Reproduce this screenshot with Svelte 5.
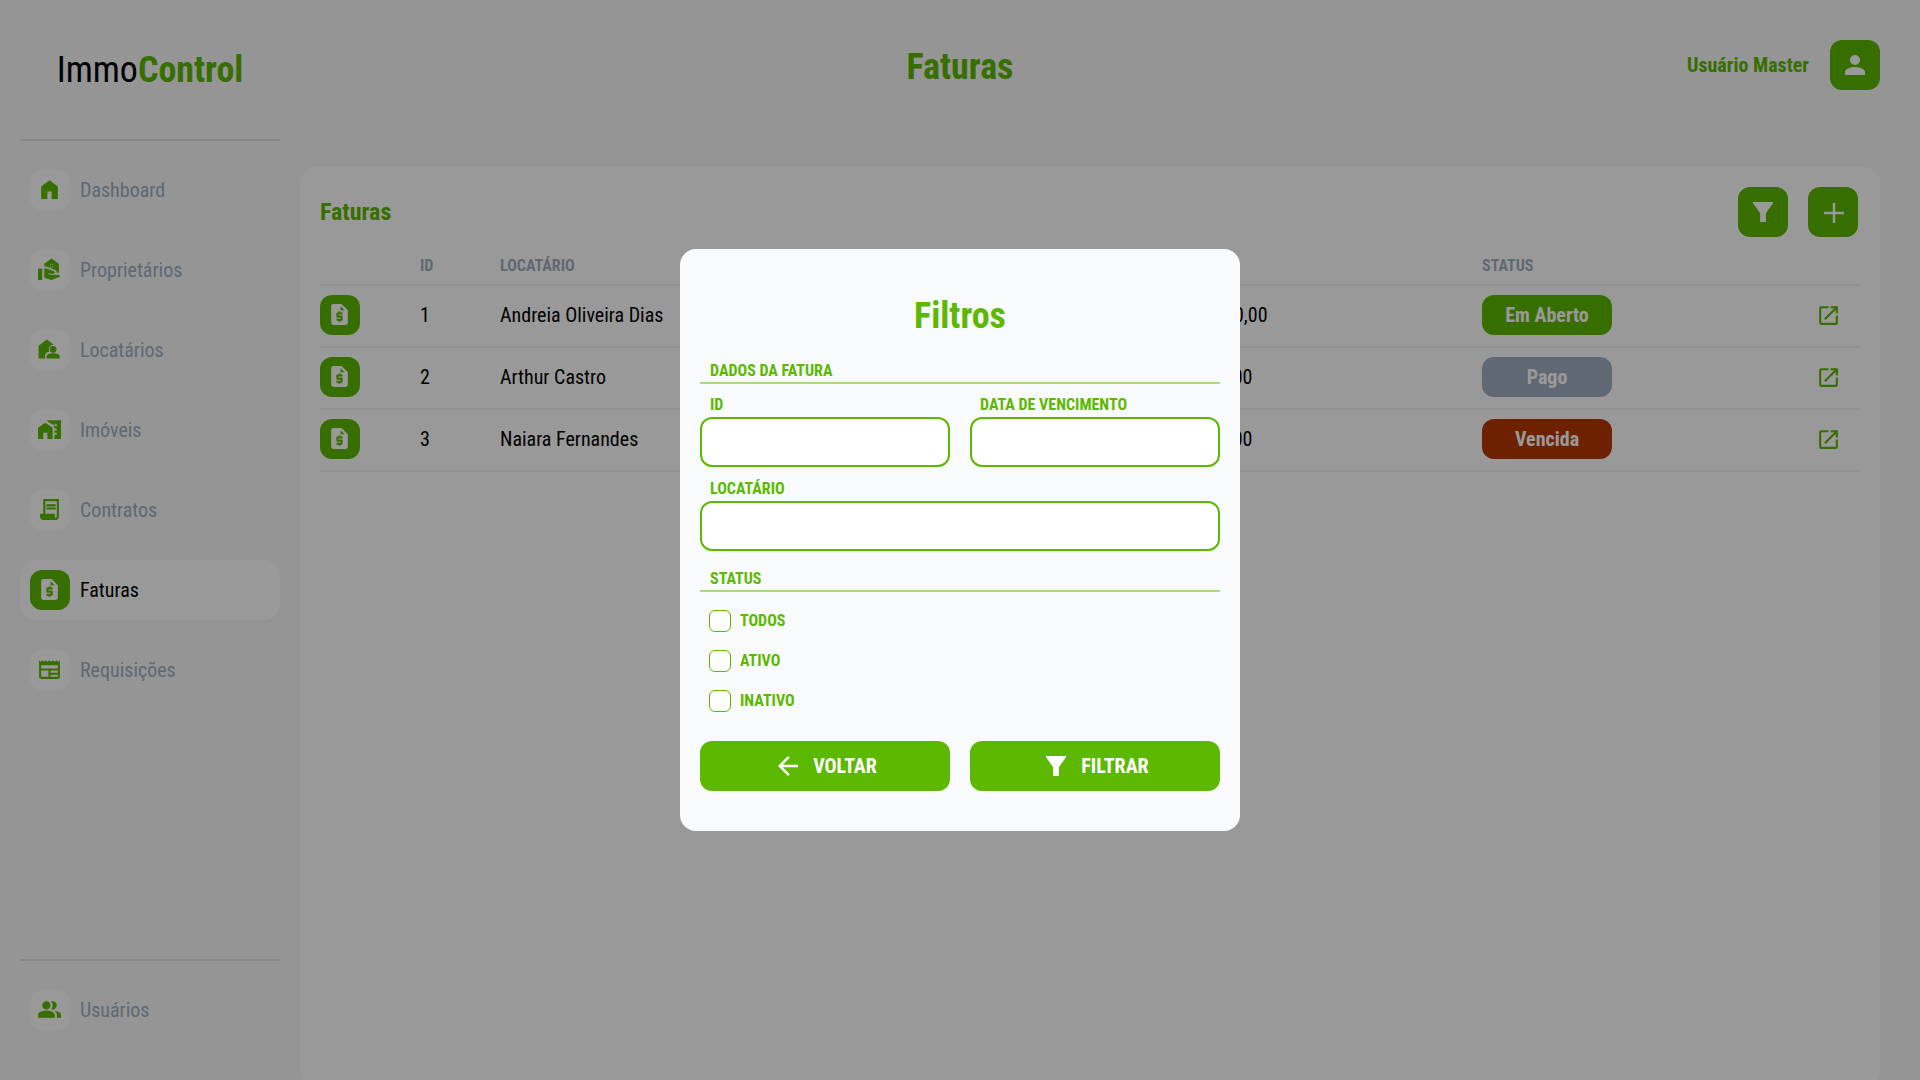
<script>
  const icons = {
    home: 'M4 21V9l8-6 8 6v12h-6v-7h-4v7z',
    owners:
      'M1 22h4V11H1zM20 17h-7l-2.09-.73.33-.94L13 16h2.82c.65 0 1.18-.53 1.18-1.18 0-.49-.31-.93-.77-1.11L8.97 11H7v9.02L14 22l8-3c0-1.1-.9-2-2-2zM14 1.5l-7 5V9h2l8.14 3.26C18.26 12.71 19 13.79 19 15h2V6.5zM13.5 10h-1V9h1zm0-2h-1V7h1zm2 2h-1V9h1zm0-2h-1V7h1z',
    tenants:
      'M1.5 20.7V8.5l8-6 6.6 5a4.4 4.4 0 0 0-4.3 6.5c-2.6.7-4.1 2.1-4.1 4v2.7zM15.5 8.6a3.2 3.2 0 1 1 0 6.4 3.2 3.2 0 0 1 0-6.4zM9.2 20.7v-2.2c0-1.7 3.2-2.9 6.3-2.9s6.3 1.2 6.3 2.9v2.2z',
    properties:
      'M1 21V10.4l7-5 7 5V21h-5v-6H6v6zM10 3h13v18h-6.3v-4H19v-2h-2.3v-2H19v-2h-2.3V9.5L15.4 8.4 17 8.6h2V7h-2v1.2L10 4.3z',
    contracts:
      'M6 22a3 3 0 0 1-3-3v-3h3V2h15v17a3 3 0 0 1-3 3zm12-2a1 1 0 0 0 1-1V4H8v12h9v3a1 1 0 0 0 1 1zM9 9V7h9v2zm0 3v-2h9v2z',
    invoice:
      'M14 2H6a2 2 0 0 0-2 2v16a2 2 0 0 0 2 2h12a2 2 0 0 0 2-2V8zM13 4l4 4h-4zM15 12h-4v1h3a1 1 0 0 1 1 1v3a1 1 0 0 1-1 1h-1v1h-2v-1H9v-2h4v-1h-3a1 1 0 0 1-1-1v-3a1 1 0 0 1 1-1h1V9h2v1h2z',
    requests:
      'M22 3l-1.67 1.67L18.67 3 17 4.67 15.33 3l-1.66 1.67L12 3l-1.67 1.67L8.67 3 7 4.67 5.33 3 3.67 4.67 2 3v16a2 2 0 0 0 2 2h16a2 2 0 0 0 2-2zM11 19H4v-6h7zm9 0h-7v-2h7zm0-4h-7v-2h7zm0-4H4V8h16z',
    users:
      'M1 20v-2.8q0-.85.438-1.562T2.6 14.55q1.55-.775 3.15-1.162T9 13t3.25.388 3.15 1.162q.725.375 1.163 1.088T17 17.2V20zm18 0v-3q0-1.1-.612-2.113T16.65 13.15q1.275.15 2.4.513t2.1.887q.9.5 1.375 1.112T23 17v3zM9 12q-1.65 0-2.825-1.175T5 8t1.175-2.825T9 4t2.825 1.175T13 8t-1.175 2.825T9 12m10-4q0 1.65-1.175 2.825T15 12q-.275 0-.7-.062t-.7-.138q.675-.8 1.038-1.775T15 8t-.362-2.025T13.6 4.2q.35-.125.7-.163T15 4q1.65 0 2.825 1.175T19 8',
    person:
      'M12 12a4 4 0 1 0 0-8 4 4 0 0 0 0 8zm0 1.6c-2.7 0-8 1.3-8 4V20h16v-2.4c0-2.7-5.3-4-8-4z',
    filter: 'M4 4h16v.9L14.3 13v7H9.7v-7L4 4.9z',
    plus: 'M20.8 13.8h-7v7h-2v-7h-7v-2h7v-7h2v7h7z',
    back: 'M20 11H7.83l5.59-5.59L12 4l-8 8 8 8 1.41-1.41L7.83 13H20z',
    open: 'M19 19H5V5h7V3H5a2 2 0 0 0-2 2v14a2 2 0 0 0 2 2h14a2 2 0 0 0 2-2v-7h-2zM14 3v2h3.59l-9.83 9.83 1.41 1.41L19 6.41V10h2V3z'
  };

  const menu = [
    { label: 'Dashboard', icon: 'home' },
    { label: 'Proprietários', icon: 'owners' },
    { label: 'Locatários', icon: 'tenants' },
    { label: 'Imóveis', icon: 'properties' },
    { label: 'Contratos', icon: 'contracts' },
    { label: 'Faturas', icon: 'invoice', active: true },
    { label: 'Requisições', icon: 'requests' }
  ];

  const invoices = [
    { id: 1, tenant: 'Andreia Oliveira Dias', due: '10/05/2023', value: 'R$ 1.200,00', status: 'Em Aberto', kind: 'open' },
    { id: 2, tenant: 'Arthur Castro', due: '10/05/2023', value: 'R$ 800,00', status: 'Pago', kind: 'paid' },
    { id: 3, tenant: 'Naiara Fernandes', due: '10/04/2023', value: 'R$ 900,00', status: 'Vencida', kind: 'late' }
  ];

  const statuses = ['Todos', 'Ativo', 'Inativo'];
</script>

{#snippet icon(name, large = false)}
  <svg class="icon" class:large viewBox="0 0 24 24" aria-hidden="true">
    <path fill-rule="evenodd" d={icons[name]} />
  </svg>
{/snippet}

{#snippet navItem(item)}
  <a class="nav-item" class:active={item.active} href="#{item.icon}">
    <span class="tile">{@render icon(item.icon)}</span>
    {item.label}
  </a>
{/snippet}

<div class="app">
  <aside>
    <div class="logo">Immo<strong>Control</strong></div>
    <nav class="main-nav">
      {#each menu as item}
        {@render navItem(item)}
      {/each}
    </nav>
    <nav class="bottom-nav">
      {@render navItem({ label: 'Usuários', icon: 'users' })}
    </nav>
  </aside>

  <main>
    <header>
      <h1>Faturas</h1>
      <div class="user">
        <span>Usuário Master</span>
        <button class="square" aria-label="Perfil">{@render icon('person', true)}</button>
      </div>
    </header>

    <section class="panel">
      <div class="toolbar">
        <h2>Faturas</h2>
        <button class="square" aria-label="Filtrar faturas">{@render icon('filter', true)}</button>
        <button class="square" aria-label="Nova fatura">{@render icon('plus', true)}</button>
      </div>
      <table>
        <colgroup>
          <col class="c-icon" /><col class="c-id" /><col class="c-tenant" /><col class="c-due" />
          <col class="c-value" /><col class="c-status" /><col />
        </colgroup>
        <thead>
          <tr>
            <th></th><th>ID</th><th>LOCATÁRIO</th><th>VENCIMENTO</th><th>VALOR</th><th>STATUS</th><th></th>
          </tr>
        </thead>
        <tbody>
          {#each invoices as row}
            <tr>
              <td><span class="tile solid">{@render icon('invoice')}</span></td>
              <td>{row.id}</td>
              <td>{row.tenant}</td>
              <td>{row.due}</td>
              <td>{row.value}</td>
              <td><span class="badge {row.kind}">{row.status}</span></td>
              <td class="action">
                <a href="#fatura-{row.id}" aria-label="Abrir fatura {row.id}">{@render icon('open')}</a>
              </td>
            </tr>
          {/each}
        </tbody>
      </table>
    </section>
  </main>
</div>

<div class="overlay">
  <form class="modal" role="dialog" aria-labelledby="filter-title">
    <h2 id="filter-title">Filtros</h2>

    <h3>DADOS DA FATURA</h3>
    <div class="fields">
      <div class="field">
        <label for="f-id">ID</label>
        <input id="f-id" type="text" />
      </div>
      <div class="field">
        <label for="f-due">DATA DE VENCIMENTO</label>
        <input id="f-due" type="text" />
      </div>
      <div class="field wide">
        <label for="f-tenant">LOCATÁRIO</label>
        <input id="f-tenant" type="text" />
      </div>
    </div>

    <h3>STATUS</h3>
    <div class="checks">
      {#each statuses as s}
        <label><input type="checkbox" />{s.toUpperCase()}</label>
      {/each}
    </div>

    <div class="buttons">
      <button type="button">{@render icon('back', true)}VOLTAR</button>
      <button type="button">{@render icon('filter', true)}FILTRAR</button>
    </div>
  </form>
</div>

<style>
  :global(body) {
    overflow: hidden;
    background: #f8f9fa;
    font-family: 'Roboto Condensed', Roboto, 'Liberation Sans', sans-serif;
    font-size: 20px;
    line-height: 24px;
    color: #000;
  }
  .app,
  .overlay {
    --green: #5cb800;
    --gray: #a0aec0;
  }
  .app *,
  .overlay * {
    box-sizing: border-box;
  }
  h1,
  h2,
  h3 {
    margin: 0;
    font-weight: 700;
    color: var(--green);
  }
  button {
    border: 0;
    padding: 0;
    font: inherit;
    color: #fff;
    background: var(--green);
    border-radius: 12px;
    cursor: pointer;
  }
  .icon {
    display: block;
    flex: none;
    width: 25px;
    height: 25px;
    fill: currentColor;
  }
  .icon.large {
    width: 30px;
    height: 30px;
  }

  .app {
    display: flex;
    height: 100vh;
  }
  aside {
    display: flex;
    flex-direction: column;
    width: 300px;
    flex: none;
    padding: 0 20px 40px;
  }
  .logo {
    height: 141px;
    line-height: 140px;
    text-align: center;
    font-size: 36px;
    border-bottom: 2px solid #e0e0e0;
  }
  .logo strong {
    color: var(--green);
  }
  .main-nav {
    display: flex;
    flex-direction: column;
    gap: 20px;
    padding-top: 19px;
  }
  .bottom-nav {
    margin-top: auto;
    padding-top: 19px;
    border-top: 2px solid #e0e0e0;
  }
  .nav-item {
    display: flex;
    align-items: center;
    gap: 10px;
    height: 60px;
    padding: 0 10px;
    border-radius: 16px;
    color: var(--gray);
    text-decoration: none;
  }
  .tile {
    display: flex;
    width: 40px;
    height: 40px;
    padding: 7px;
    border-radius: 12px;
    background: #fff;
    color: var(--green);
  }
  .tile.solid,
  .active .tile {
    background: var(--green);
    color: #fff;
  }
  .nav-item.active {
    background: #fff;
    color: #000;
    box-shadow: 0 4px 6px rgba(0, 0, 0, 0.02);
  }

  main {
    flex: 1;
    min-width: 0;
    padding-right: 40px;
  }
  header {
    display: grid;
    grid-template-columns: 1fr auto 1fr;
    align-items: center;
    height: 167px;
    padding-bottom: 37px;
    margin-left: -260px;
  }
  h1 {
    grid-column: 2;
    padding-top: 3px;
    font-size: 36px;
    line-height: 42px;
  }
  .user {
    display: flex;
    align-items: center;
    justify-content: flex-end;
    gap: 21px;
    font-weight: 700;
    color: var(--green);
  }
  .square {
    display: flex;
    align-items: center;
    justify-content: center;
    width: 50px;
    height: 50px;
  }
  .panel {
    min-height: calc(100vh - 160px);
    padding: 20px;
    border-radius: 16px;
    background: #fff;
  }
  .toolbar {
    display: flex;
    align-items: center;
    gap: 20px;
    padding-right: 2px;
  }
  .toolbar h2 {
    flex: 1;
    font-size: 24px;
    line-height: 28px;
  }

  table {
    width: 100%;
    table-layout: fixed;
    border-spacing: 0;
  }
  .c-icon {
    width: 100px;
  }
  .c-id {
    width: 80px;
  }
  .c-tenant {
    width: 540px;
  }
  .c-due {
    width: 134px;
  }
  .c-value {
    width: 308px;
  }
  .c-status {
    width: 160px;
  }
  th,
  td {
    padding: 0;
    text-align: left;
    border-bottom: 2px solid #f2f2f2;
  }
  th {
    height: 49px;
    padding-top: 10px;
    font-size: 16px;
    line-height: 20px;
    color: var(--gray);
  }
  td {
    height: 62px;
    padding-bottom: 2px;
  }
  .badge {
    display: block;
    width: 130px;
    border-radius: 12px;
    font-weight: 700;
    line-height: 40px;
    text-align: center;
    color: #fff;
    background: var(--green);
  }
  .badge.paid {
    background: var(--gray);
  }
  .badge.late {
    background: #b83700;
  }
  .action a {
    display: flex;
    justify-content: flex-end;
    padding-right: 19px;
    color: var(--green);
  }

  .overlay {
    position: fixed;
    inset: 0;
    display: flex;
    align-items: center;
    justify-content: center;
    background: rgba(0, 0, 0, 0.4);
  }
  .modal {
    width: 560px;
    padding: 40px 20px;
    border-radius: 16px;
    background: #f8fafc;
    color: var(--green);
  }
  .modal h2 {
    font-size: 36px;
    line-height: 54px;
    text-align: center;
  }
  .modal h3 {
    margin-top: 17px;
    padding: 1px 10px;
    border-bottom: 2px solid #aad97e;
  }
  .modal h3,
  .modal label {
    font-size: 16px;
    font-weight: 700;
    line-height: 20px;
  }
  .fields {
    display: grid;
    grid-template-columns: 1fr 1fr;
    gap: 12px 20px;
    padding-top: 11px;
  }
  .field {
    display: flex;
    flex-direction: column;
    gap: 2px;
  }
  .field.wide {
    grid-column: 1 / -1;
  }
  .field label {
    padding-left: 10px;
  }
  .field input {
    width: 100%;
    height: 50px;
    padding: 0 12px;
    border: 2px solid var(--green);
    border-radius: 12px;
    background: #fff;
    font: inherit;
    color: #000;
  }
  .checks {
    display: flex;
    flex-direction: column;
    align-items: flex-start;
    gap: 18px;
    padding: 18px 9px 29px;
  }
  .checks label {
    display: flex;
    align-items: center;
    gap: 9px;
  }
  .checks input {
    appearance: none;
    width: 22px;
    height: 22px;
    margin: 0;
    border: 1px solid var(--green);
    border-radius: 6px;
    background: #fff;
  }
  .buttons {
    display: grid;
    grid-template-columns: 1fr 1fr;
    gap: 20px;
  }
  .buttons button {
    display: flex;
    align-items: center;
    justify-content: center;
    gap: 10px;
    height: 50px;
    font-weight: 700;
  }
</style>
